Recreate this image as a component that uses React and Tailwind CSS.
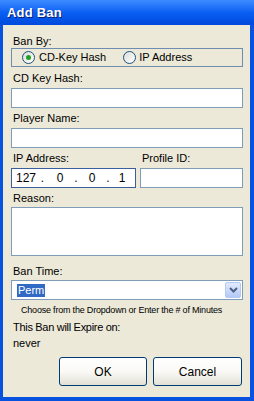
import React from "react";

function Label({ children, className = "" }) {
    return <div className={"text-[11px] leading-[13px] text-black pl-[2px] " + className}>{children}</div>;
}

function Field({ className = "", children }) {
    return <div className={"bg-white border border-[#7f9db9] " + className}>{children}</div>;
}

function Radio({ checked }) {
    return (
        <span className="w-[13px] h-[13px] rounded-full border border-[#1c5180] bg-gradient-to-br from-[#dcdcd7] to-white flex items-center justify-center">
            {checked && <span className="w-[5px] h-[5px] rounded-full bg-[#21a121]" />}
        </span>
    );
}

function XpButton({ children, className = "" }) {
    return (
        <button className={"h-[29px] rounded-[3px] border border-[#003c74] bg-gradient-to-b from-white via-[#faf9f6] to-[#e3e0d6] text-[12px] text-black " + className}>
            {children}
        </button>
    );
}

export default function App() {
    return (
        <div className="w-[254px] h-[401px] flex flex-col bg-[#0852e0] font-['Liberation_Sans',Arial,sans-serif]">
            <div className="h-[25px] pl-[7px] flex items-center bg-gradient-to-b from-[#3d8bff] via-[#0a5ff3] to-[#0049dc]">
                <span className="text-white font-bold text-[13px] tracking-[0.2px] [text-shadow:1px_1px_0_#0a1e70]">Add Ban</span>
            </div>
            <div className="flex-1 ml-[3px] mr-[4px] mb-[4px] bg-[#ece9d8] pl-[8px] pr-[7px] flex flex-col">
                <Label className="mt-[10px]">Ban By:</Label>
                <div className="h-[19px] border border-[#6f8db0] flex items-center text-[11px]">
                    <span className="ml-[10px]"><Radio checked /></span>
                    <span className="ml-[4px]">CD-Key Hash</span>
                    <span className="ml-[17px]"><Radio /></span>
                    <span className="ml-[3px]">IP Address</span>
                </div>

                <Label className="mt-[5px]">CD Key Hash:</Label>
                <Field className="mt-[3px] h-[20px]" />

                <Label className="mt-[4px]">Player Name:</Label>
                <Field className="mt-[3px] h-[20px]" />

                <div className="mt-[4px] flex gap-[4px]">
                    <div className="w-[125px] flex flex-col">
                        <Label>IP Address:</Label>
                        <div className="mt-[3px] h-[20px] bg-white border border-[#3c5e9c] flex items-center text-[12px] pl-[4px]">
                            <span className="w-[18px]">127</span>
                            <span className="w-[17px] text-center">.</span>
                            <span className="w-[18px] text-center">0</span>
                            <span className="w-[14px] text-center">.</span>
                            <span className="w-[18px] text-center">0</span>
                            <span className="w-[14px] text-center">.</span>
                            <span className="w-[14px] text-center">1</span>
                        </div>
                    </div>
                    <div className="flex-1 flex flex-col">
                        <Label>Profile ID:</Label>
                        <Field className="mt-[3px] h-[20px]" />
                    </div>
                </div>

                <Label className="mt-[4px]">Reason:</Label>
                <Field className="mt-[2px] h-[49px]" />

                <Label className="mt-[9px]">Ban Time:</Label>
                <Field className="mt-[2px] h-[20px] flex items-center pl-[5px] pr-[1px]">
                    <span className="bg-[#316ac5] text-white text-[11px] leading-[13px] px-[1px]">Perm</span>
                    <span className="ml-auto w-[16px] h-[16px] rounded-[2px] border border-[#b5c9f4] bg-gradient-to-b from-[#e2ebfe] to-[#b4c8f5] flex items-center justify-center">
                        <svg width="9" height="6" viewBox="0 0 9 6">
                            <path d="M1 1 L4.5 4.5 L8 1" fill="none" stroke="#4d6185" strokeWidth="2" />
                        </svg>
                    </span>
                </Field>

                <div className="mt-[5px] text-[9px] leading-[11px] tracking-[-0.2px] pl-[10px]">Choose from the Dropdown or Enter the # of Minutes</div>
                <Label className="mt-[5px] tracking-[-0.3px]">This Ban will Expire on:</Label>
                <Label className="mt-[3px]">never</Label>

                <div className="mt-[7px] flex justify-end gap-[6px] pr-[1px]">
                    <XpButton className="w-[88px]">OK</XpButton>
                    <XpButton className="w-[89px]">Cancel</XpButton>
                </div>
            </div>
        </div>
    );
}
